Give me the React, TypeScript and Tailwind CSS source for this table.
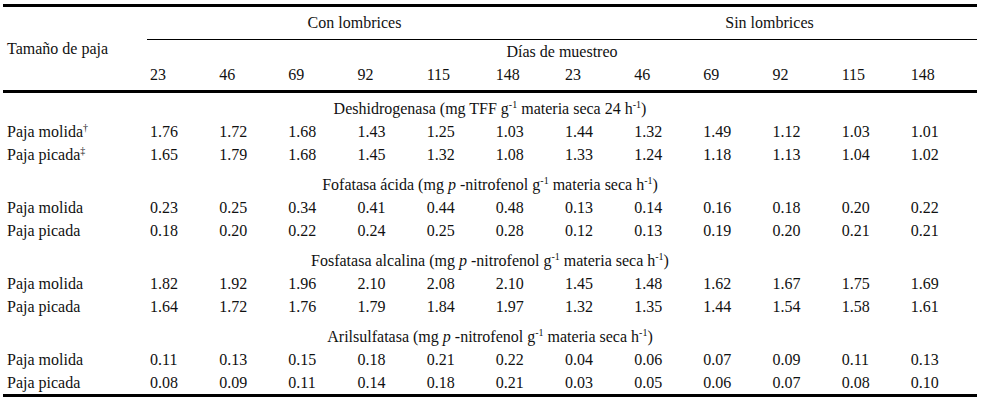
import React from "react";

const days = ["23", "46", "69", "92", "115", "148", "23", "46", "69", "92", "115", "148"];

function Sup({ children }: { children: React.ReactNode }) {
	return <span className="relative top-[-6px] text-[10px] leading-none">{children}</span>;
}

function Unit() {
	return (
		<>
			(mg <i>p</i> -nitrofenol g<Sup>-1</Sup> materia seca h<Sup>-1</Sup>)
		</>
	);
}

interface Section {
	title: React.ReactNode;
	rows: { label: React.ReactNode; values: string[] }[];
}

const sections: Section[] = [
	{
		title: (
			<>
				Deshidrogenasa (mg TFF g<Sup>-1</Sup> materia seca 24 h<Sup>-1</Sup>)
			</>
		),
		rows: [
			{
				label: (
					<>
						Paja molida<Sup>†</Sup>
					</>
				),
				values: ["1.76", "1.72", "1.68", "1.43", "1.25", "1.03", "1.44", "1.32", "1.49", "1.12", "1.03", "1.01"],
			},
			{
				label: (
					<>
						Paja picada<Sup>‡</Sup>
					</>
				),
				values: ["1.65", "1.79", "1.68", "1.45", "1.32", "1.08", "1.33", "1.24", "1.18", "1.13", "1.04", "1.02"],
			},
		],
	},
	{
		title: (
			<>
				Fofatasa ácida <Unit />
			</>
		),
		rows: [
			{ label: "Paja molida", values: ["0.23", "0.25", "0.34", "0.41", "0.44", "0.48", "0.13", "0.14", "0.16", "0.18", "0.20", "0.22"] },
			{ label: "Paja picada", values: ["0.18", "0.20", "0.22", "0.24", "0.25", "0.28", "0.12", "0.13", "0.19", "0.20", "0.21", "0.21"] },
		],
	},
	{
		title: (
			<>
				Fosfatasa alcalina <Unit />
			</>
		),
		rows: [
			{ label: "Paja molida", values: ["1.82", "1.92", "1.96", "2.10", "2.08", "2.10", "1.45", "1.48", "1.62", "1.67", "1.75", "1.69"] },
			{ label: "Paja picada", values: ["1.64", "1.72", "1.76", "1.79", "1.84", "1.97", "1.32", "1.35", "1.44", "1.54", "1.58", "1.61"] },
		],
	},
	{
		title: (
			<>
				Arilsulfatasa <Unit />
			</>
		),
		rows: [
			{ label: "Paja molida", values: ["0.11", "0.13", "0.15", "0.18", "0.21", "0.22", "0.04", "0.06", "0.07", "0.09", "0.11", "0.13"] },
			{ label: "Paja picada", values: ["0.08", "0.09", "0.11", "0.14", "0.18", "0.21", "0.03", "0.05", "0.06", "0.07", "0.08", "0.10"] },
		],
	},
];

export default function App() {
	return (
		<div className="min-h-screen bg-white text-[#111] text-[16px] leading-none font-serif">
			<div className="font-['Liberation_Serif']">
				<div className="[font-family:Liberation_Serif]">
					<div className="ml-[3px] w-[974px] pt-[4px]">
						<div className="border-t-[3px] border-black" />
						{/* header */}
						<div className="grid grid-cols-[144px_repeat(12,minmax(0,1fr))]">
							<div className="row-span-3 flex items-center pl-[4px]">Tamaño de paja</div>
							<div className="col-span-6 h-[32px] flex items-center justify-center">Con lombrices</div>
							<div className="col-span-6 h-[32px] flex items-center justify-center">Sin lombrices</div>
							<div className="col-span-12 h-[25px] border-t border-black flex items-center justify-center">
								Días de muestreo
							</div>
							{days.map((d, i) => (
								<div key={i} className="h-[26px] pb-[4px] pl-[3px] flex items-center">
									{d}
								</div>
							))}
						</div>
						<div className="border-t-[3px] border-black" />

						{sections.map((s, si) => (
							<div key={si}>
								<div className={si === 0 ? "pt-[4px]" : "pt-[7px]"}>
									<div className="h-[24px] flex items-center justify-center">
										<span>{s.title}</span>
									</div>
								</div>
								{s.rows.map((r, ri) => (
									<div key={ri} className="grid grid-cols-[144px_repeat(12,minmax(0,1fr))] h-[22.5px] items-center">
										<div className="pl-[4px]">{r.label}</div>
										{r.values.map((v, vi) => (
											<div key={vi} className="pl-[3px]">
												{v}
											</div>
										))}
									</div>
								))}
							</div>
						))}
						<div className="border-t-[3px] border-black" />
					</div>
				</div>
			</div>
		</div>
	);
}
